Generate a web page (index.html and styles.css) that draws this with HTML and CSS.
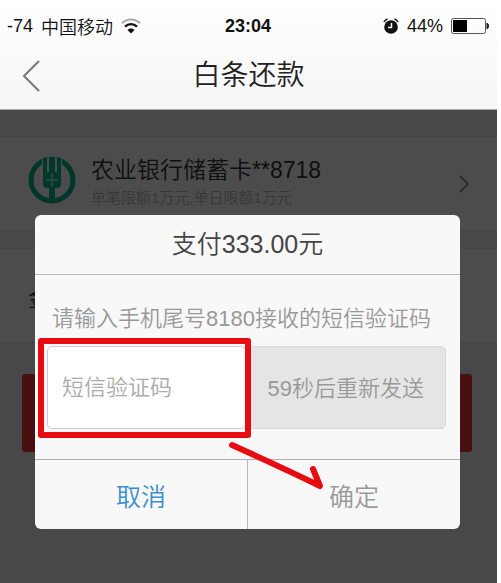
FILE: index.html
```html
<!DOCTYPE html>
<html lang="zh-CN">
<head>
    <meta charset="UTF-8">
    <meta name="viewport" content="width=device-width, initial-scale=1.0">
    <title>白条还款</title>
    <link rel="stylesheet" href="styles.css">
</head>
<body>
    <header class="header">
        <div class="status-bar">
            <div class="status-left">
                <span>-74</span>
                <span>中国移动</span>
                <svg class="icon-wifi" width="20" height="16" viewBox="0 0 20 16" fill="none">
                    <path d="M1 5.2C6 .2 14 .2 19 5.2" stroke="#aaa" stroke-width="2"/>
                    <path d="M4 8.7c3.5-3.5 8.500-3.500 12 0" stroke="#111" stroke-width="2.400"/>
                    <path d="M6.500 12c2-2 5-2 7 0L10 15.500z" fill="#111"/>
                </svg>
            </div>
            <strong class="status-time">23:04</strong>
            <div class="status-right">
                <svg class="icon-alarm" width="16" height="16" viewBox="0 0 16 16" fill="none">
                    <circle cx="8" cy="9" r="6.800" fill="#111"/>
                    <path d="M1 4Q2 2 4.500 1M15 4Q14 2 11.500 1" stroke="#111" stroke-width="1.500"/>
                    <path d="M8.500 5v4.500H5" stroke="#fff" stroke-width="1.500"/>
                </svg>
                <span>44%</span>
                <svg width="38" height="16" viewBox="0 0 38 16" fill="none">
                    <rect x=".5" y=".5" width="34" height="15" rx="2" stroke="#555"/>
                    <rect x="2" y="2" width="14" height="12" fill="#000"/>
                    <path d="M36 5c2 .5 2 5.500 0 6z" fill="#222" stroke="#222"/>
                </svg>
            </div>
        </div>
        <nav class="nav">
            <button class="back" type="button" aria-label="返回">
                <svg width="18" height="32" viewBox="0 0 18 32" fill="none">
                    <path d="M17 1 2 16l15 15" stroke="#777" stroke-width="2"/>
                </svg>
            </button>
            <h1>白条还款</h1>
        </nav>
    </header>

    <main class="content">
        <a class="card bank" href="#">
            <svg class="bank-logo" width="48" height="48" viewBox="0 0 48 48">
                <circle cx="24" cy="24" r="21" fill="none" stroke="#00b88c" stroke-width="5"/>
                <path d="M14 0h20v8H14z" fill="#fff"/>
                <path d="M15 2l4-1v15h2V1h6v15h2V1l4 1v28l-3 2h-3v13h-6V32h-3l-3-2z" fill="#00b88c"/>
                <path d="M24 17v14M17 24h14" stroke="#fff" stroke-width="1"/>
            </svg>
            <div class="bank-info">
                <div class="bank-name">农业银行储蓄卡**8718</div>
                <div class="bank-limit">单笔限额1万元,单日限额1万元</div>
            </div>
            <svg width="10" height="18" viewBox="0 0 10 18" fill="none">
                <path d="m1 1 8 8-8 8" stroke="#999" stroke-width="2"/>
            </svg>
        </a>
        <div class="card amount">金额</div>
        <button class="submit" type="button" aria-label="还款"></button>

        <div class="overlay">
            <form class="modal" role="dialog" aria-labelledby="modalTitle">
                <h2 class="modal-title" id="modalTitle">支付333.00元</h2>
                <div class="modal-body">
                    <label for="code">请输入手机尾号8180接收的短信验证码</label>
                    <div class="code-row">
                        <div class="field">
                            <input type="text" id="code" name="code" placeholder="短信验证码">
                        </div>
                        <button class="resend" type="button" disabled>59秒后重新发送</button>
                    </div>
                </div>
                <div class="modal-actions">
                    <button class="cancel" type="button">取消</button>
                    <button class="confirm" type="button" disabled>确定</button>
                </div>
                <!-- hint arrow from the code field to the confirm button -->
                <svg class="arrow" width="96" height="52" viewBox="0 0 96 52" fill="none">
                    <path d="M4 5Q55 28 92 46L85 29" stroke="#e60c12" stroke-width="6" stroke-linecap="round" stroke-linejoin="round"/>
                </svg>
            </form>
        </div>
    </main>
</body>
</html>
```
FILE: styles.css
```css
* { box-sizing: border-box; }
html { height: 100%; background: #fff; }
body {
    display: flex;
    flex-direction: column;
    min-height: 100%;
    margin: 0 4px 0 0;
    font-family: "Liberation Sans", "Noto Sans CJK SC", sans-serif;
    font-weight: 350;
    color: #222;
}
h1, h2 { margin: 0; font-weight: 350; }
button, input { font: inherit; }
button { padding: 0; border: none; background: none; cursor: pointer; }
svg { display: block; flex: none; }

/* header */
.header {
    height: 110px;
    padding-top: 12px;
    background: linear-gradient(#fff, #f6f6f6);
    border-bottom: 1px solid #aaa;
}
.status-bar {
    display: grid;
    grid-template-columns: 1fr auto 1fr;
    align-items: center;
    height: 28px;
    padding: 0 8px 0 7px;
    font-size: 18px;
    color: #111;
}
.status-left, .status-right { display: flex; align-items: center; gap: 8px; }
.status-right { justify-content: flex-end; }
.status-time { font-weight: bold; }
.nav {
    display: grid;
    grid-template-columns: 48px 1fr 48px;
    align-items: center;
    height: 72px;
}
.back { padding-left: 22px; }
.nav h1 { font-size: 28px; line-height: 40px; text-align: center; }

/* page content */
.content {
    position: relative;
    flex: 1;
    padding-top: 26px;
    background: #f0f0f3;
}
.card {
    display: flex;
    align-items: center;
    height: 95px;
    margin-bottom: 17px;
    padding: 0 28px;
    background: #fff;
    border-top: 1px solid #e4e4e8;
    border-bottom: 1px solid #e4e4e8;
    color: #333;
    text-decoration: none;
}
.bank { gap: 15px; }
.bank-logo { margin-bottom: 8px; }
.bank-info { flex: 1; padding-bottom: 4px; }
.bank-name { font-size: 23px; line-height: 32px; }
.bank-limit { font-size: 15px; line-height: 24px; color: #bbb; }
.amount { margin-bottom: 31px; font-size: 22px; }
.submit {
    display: block;
    width: calc(100% - 47px);
    height: 78px;
    margin: 0 25px 0 22px;
    border-radius: 3px;
    background: #f4363c;
}

/* modal */
.overlay {
    position: absolute;
    inset: 0;
    padding: 105px 37px 0 35px;
    background: rgba(0, 0, 0, .7);
}
.modal {
    position: relative;
    border-radius: 6px;
    background: #f8f8f8;
}
.modal-title {
    height: 60px;
    border-bottom: 1px solid #b8b8b8;
    font-size: 25px;
    line-height: 58px;
    text-align: center;
    color: #444;
}
.modal-body { padding: 28px 14px 30px 12px; }
.modal-body label {
    display: block;
    padding: 0 0 11px 5px;
    font-size: 22px;
    line-height: 32px;
    white-space: nowrap;
    color: #999;
}
.code-row { display: flex; height: 83px; font-size: 22px; }
.field { position: relative; flex: 1; }
.field::after {
    content: "";
    position: absolute;
    inset: -8px -5px -9px -9px;
    border: 6px solid #e60c12;
    border-radius: 3px;
    pointer-events: none;
}
.field input {
    width: 100%;
    height: 100%;
    padding: 0 14px;
    border: 1px solid #d8c8cc;
    border-radius: 5px;
    background: #fff;
}
.field input::placeholder { color: #aaa; }
.resend {
    flex: 1;
    padding-bottom: 4px;
    border: 1px solid #d8d8d8;
    border-radius: 5px;
    background: #e5e5e5;
    color: #999;
}
.modal-actions {
    display: flex;
    height: 70px;
    border-top: 1px solid #b0b0b0;
    font-size: 25px;
}
.modal-actions button { flex: 1; }
.cancel { border-right: 1px solid #b8b8b8; color: #3b8fce; }
.confirm { color: #999; }
.arrow { position: absolute; right: 136px; bottom: 37px; }
```
